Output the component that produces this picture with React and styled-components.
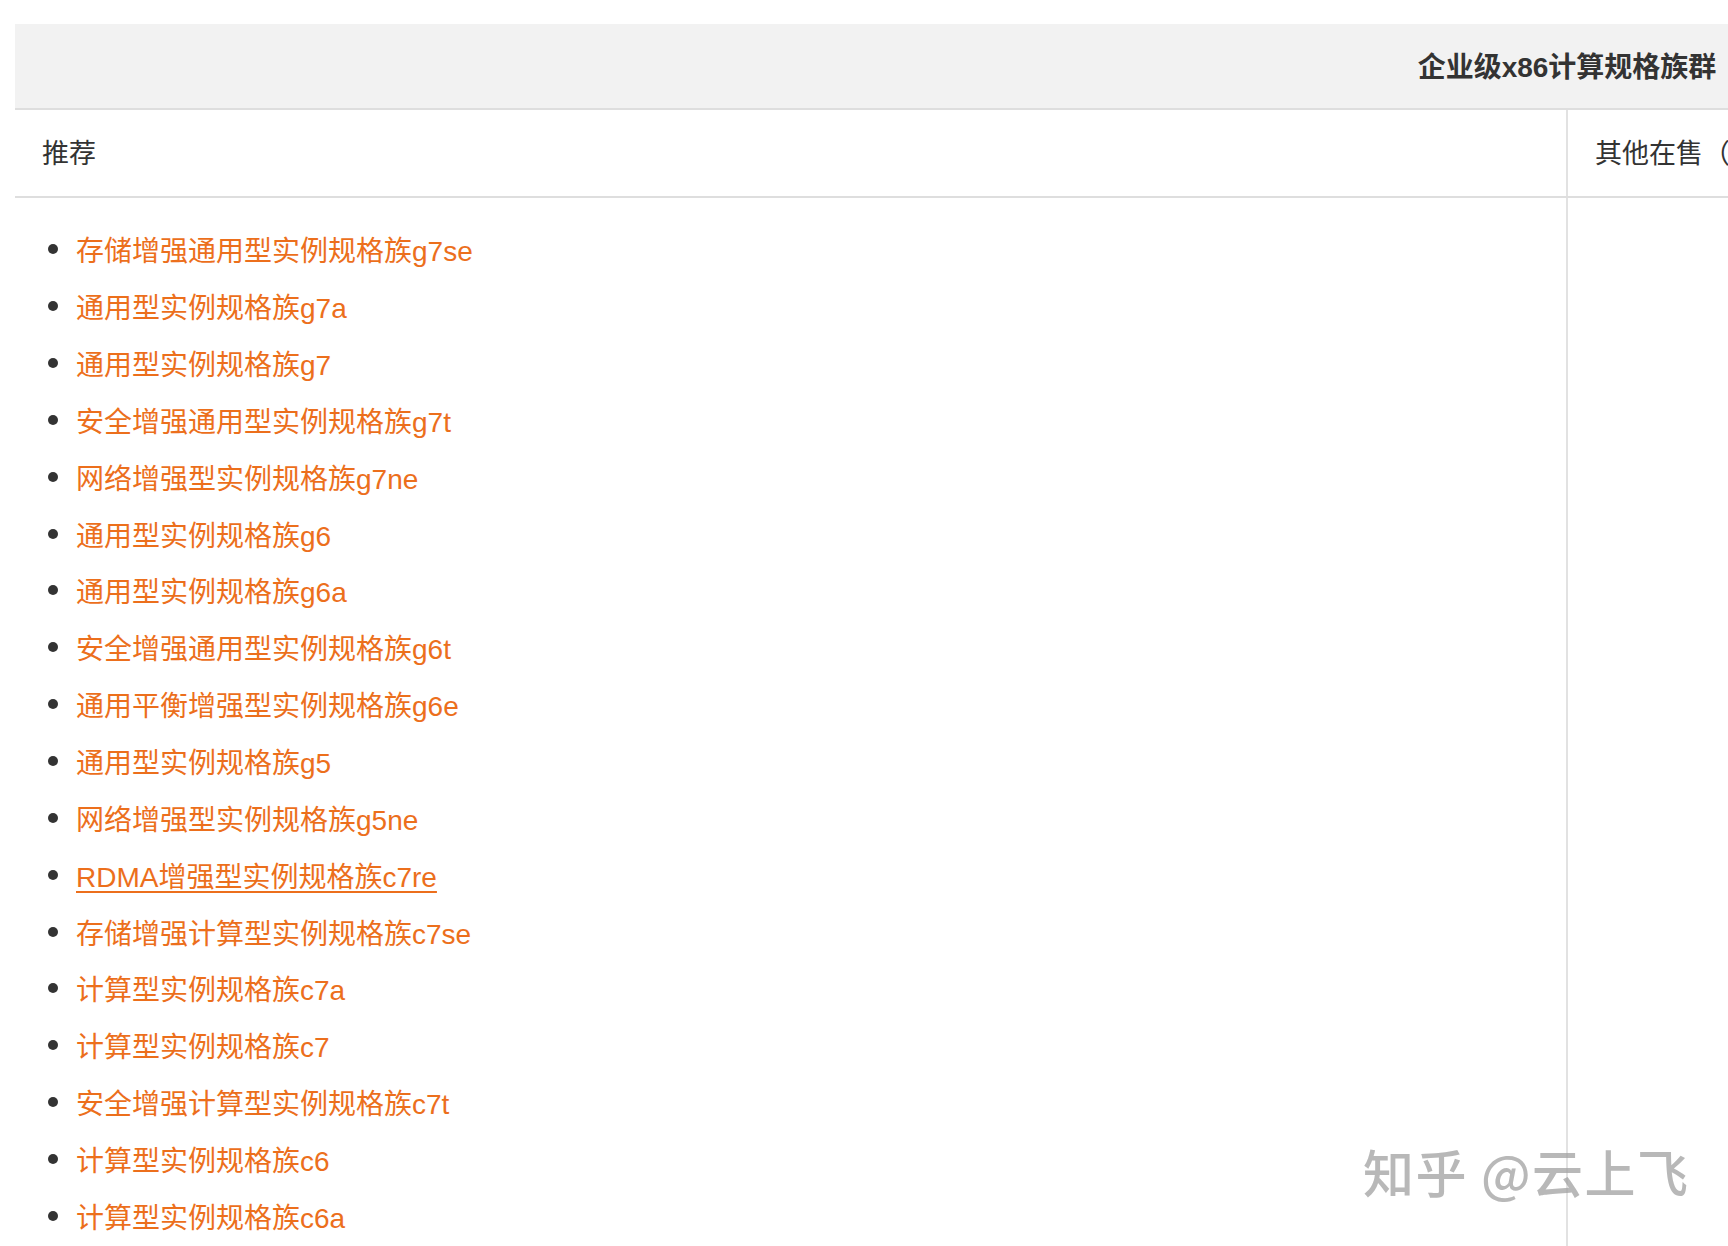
import styled, { createGlobalStyle } from 'styled-components';

const GlobalStyle = createGlobalStyle`
  html, body {
    margin: 0;
    padding: 0;
    background: #ffffff;
    overflow: hidden;
  }
  body {
    font-family: "Liberation Sans", "Noto Sans CJK SC", sans-serif;
    color: #333333;
  }
`;

const Page = styled.div`
  position: relative;
  width: 1728px;
  height: 1246px;
  overflow: hidden;
  padding: 24px 0 0 15px;
  box-sizing: border-box;
`;

const Table = styled.table`
  width: 3104px;
  table-layout: fixed;
  border-collapse: collapse;
  border-spacing: 0;
`;

const GroupHead = styled.th`
  height: 82px;
  padding: 0 0 2px;
  background: #f2f2f2;
  border-bottom: 2px solid #dedede;
  font-size: 28px;
  font-weight: 700;
  color: #333333;
  text-align: center;
  vertical-align: middle;
`;

const ColHead = styled.td`
  height: 82px;
  padding: 0 0 4px ${(p) => p.$pad}px;
  border-bottom: 2px solid #dedede;
  border-left: ${(p) => (p.$divider ? '2px solid #e2e2e2' : 'none')};
  font-size: 27px;
  color: #333333;
  text-align: left;
  vertical-align: middle;
  white-space: nowrap;
`;

const Cell = styled.td`
  padding: 23px 0 0 27px;
  vertical-align: top;
  border-left: ${(p) => (p.$divider ? '2px solid #e2e2e2' : 'none')};
`;

const List = styled.ul`
  list-style: none;
  margin: 0;
  padding: 0 0 0 6px;
`;

const Item = styled.li`
  display: flex;
  align-items: center;
  height: 56.85px;
  font-size: 28px;

  &::before {
    content: '';
    flex: none;
    width: 10px;
    height: 10px;
    border-radius: 50%;
    background: #333333;
    margin-right: 18px;
  }
`;

const Link = styled.a`
  color: #ec6f1c;
  text-decoration: ${(p) => (p.$hover ? 'underline' : 'none')};
  text-underline-offset: 4px;
  text-decoration-thickness: 2px;
  white-space: nowrap;
  cursor: pointer;
`;

const Watermark = styled.div`
  position: absolute;
  left: 1363px;
  top: 1134px;
  font-family: "Noto Sans CJK SC", sans-serif;
  font-size: 51px;
  font-weight: 500;
  color: rgba(160, 160, 160, 0.75);
  white-space: nowrap;
  pointer-events: none;
  letter-spacing: 1.5px;
`;

const families = [
  '存储增强通用型实例规格族g7se',
  '通用型实例规格族g7a',
  '通用型实例规格族g7',
  '安全增强通用型实例规格族g7t',
  '网络增强型实例规格族g7ne',
  '通用型实例规格族g6',
  '通用型实例规格族g6a',
  '安全增强通用型实例规格族g6t',
  '通用平衡增强型实例规格族g6e',
  '通用型实例规格族g5',
  '网络增强型实例规格族g5ne',
  'RDMA增强型实例规格族c7re',
  '存储增强计算型实例规格族c7se',
  '计算型实例规格族c7a',
  '计算型实例规格族c7',
  '安全增强计算型实例规格族c7t',
  '计算型实例规格族c6',
  '计算型实例规格族c6a',
  '安全增强计算型实例规格族c6t',
  '计算平衡增强型实例规格族c6e',
];

export default function App() {
  return (
    <>
      <GlobalStyle />
      <Page>
        <Table>
          <colgroup>
            <col style={{ width: '1552px' }} />
            <col style={{ width: '1552px' }} />
          </colgroup>
          <thead>
            <tr>
              <GroupHead colSpan={2}>企业级x86计算规格族群</GroupHead>
            </tr>
          </thead>
          <tbody>
            <tr>
              <ColHead $pad={27}>推荐</ColHead>
              <ColHead $pad={27} $divider>其他在售（按字母排序）</ColHead>
            </tr>
            <tr>
              <Cell>
                <List>
                  {families.map((name) => (
                    <Item key={name}>
                      <Link $hover={name.startsWith('RDMA')}>{name}</Link>
                    </Item>
                  ))}
                </List>
              </Cell>
              <Cell $divider />
            </tr>
          </tbody>
        </Table>
        <Watermark>知乎 @云上飞</Watermark>
      </Page>
    </>
  );
}
